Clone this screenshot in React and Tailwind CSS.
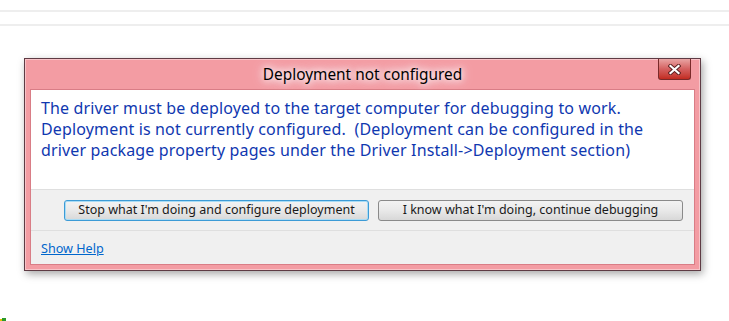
import React from 'react';

const CloseButton = () => (
  <div className="absolute right-[4px] top-[-1px] w-[33px] h-[21px] rounded-b-[3px] border border-[#7a2a2a] border-t-0 bg-gradient-to-b from-[#e8a4a4] via-[#d46060] to-[#c22a1f] flex items-center justify-center">
    <svg width="13" height="11" viewBox="0 0 13 11">
      <path d="M2.5 2 L10.5 9 M10.5 2 L2.5 9" stroke="#5a2020" strokeWidth="4" strokeLinecap="square" />
      <path d="M2.5 2 L10.5 9 M10.5 2 L2.5 9" stroke="#ffffff" strokeWidth="2.2" strokeLinecap="square" />
    </svg>
  </div>
);

const DialogButton = ({ children, focused }) => (
  <button
    className={`w-[305px] h-[21px] rounded-[3px] border text-[12.5px] leading-none text-[#1a1a1a] bg-gradient-to-b from-[#f3f3f3] via-[#e9e9e9] to-[#d8d8d8] ${
      focused ? 'border-[#3c9bd6] shadow-[inset_0_0_0_1px_#a9dcf5]' : 'border-[#8a8a8a]'
    }`}
  >
    {children}
  </button>
);

export default function App() {
  return (
    <div className="relative w-[729px] h-[321px] bg-white overflow-hidden font-['Noto_Sans',sans-serif]">
      {/* page lines behind the dialog */}
      <div className="h-[10px]" />
      <div className="h-[2px] bg-[#eeeeee]" />
      <div className="h-[12px]" />
      <div className="h-[2px] bg-[#eeeeee]" />

      {/* dialog */}
      <div className="ml-[24px] mt-[32px] w-[677px] border border-[#5e3b44] bg-[#f39ca3] shadow-[2px_3px_8px_rgba(0,0,0,0.35)]">
        <div className="border border-[#f8c3c8] px-[4px] pb-[4px]">
          <div className="relative h-[29px] flex items-center justify-center">
            <span className="text-[15.4px] text-black [text-shadow:0_0_6px_#fff,0_0_10px_#fff,0_0_14px_#fde]">
              Deployment not configured
            </span>
            <CloseButton />
          </div>
          <div className="bg-white border border-[#d97d86]">
            <div className="h-[99px] pl-[10px] pt-[8px] text-[16px] tracking-[0.15px] leading-[21px] text-[#1038b0]">
              <p>The driver must be deployed to the target computer for debugging to work.</p>
              <p>Deployment is not currently configured.&nbsp; (Deployment can be configured in the</p>
              <p>driver package property pages under the Driver Install-&gt;Deployment section)</p>
            </div>
            <div className="bg-[#f0f0f0] border-t border-[#dfdfdf]">
              <div className="h-[40px] flex items-center justify-end gap-[9px] pr-[11px] pt-[1px]">
                <DialogButton focused>Stop what I'm doing and configure deployment</DialogButton>
                <DialogButton>I know what I'm doing, continue debugging</DialogButton>
              </div>
              <div className="h-[34px] border-t border-[#dfdfdf] flex items-center pl-[10px] pt-[3px]">
                <a className="text-[12.6px] text-[#0066cc] underline">Show Help</a>
              </div>
            </div>
          </div>
        </div>
      </div>

      {/* tiny mark at the bottom-left edge */}
      <div className="absolute left-0 bottom-0 flex items-end">
        <div className="w-[2px] h-[2px] bg-[#e0c000]" />
        <div className="w-[4px] h-[3px] bg-[#2a9a2a]" />
      </div>
    </div>
  );
}
